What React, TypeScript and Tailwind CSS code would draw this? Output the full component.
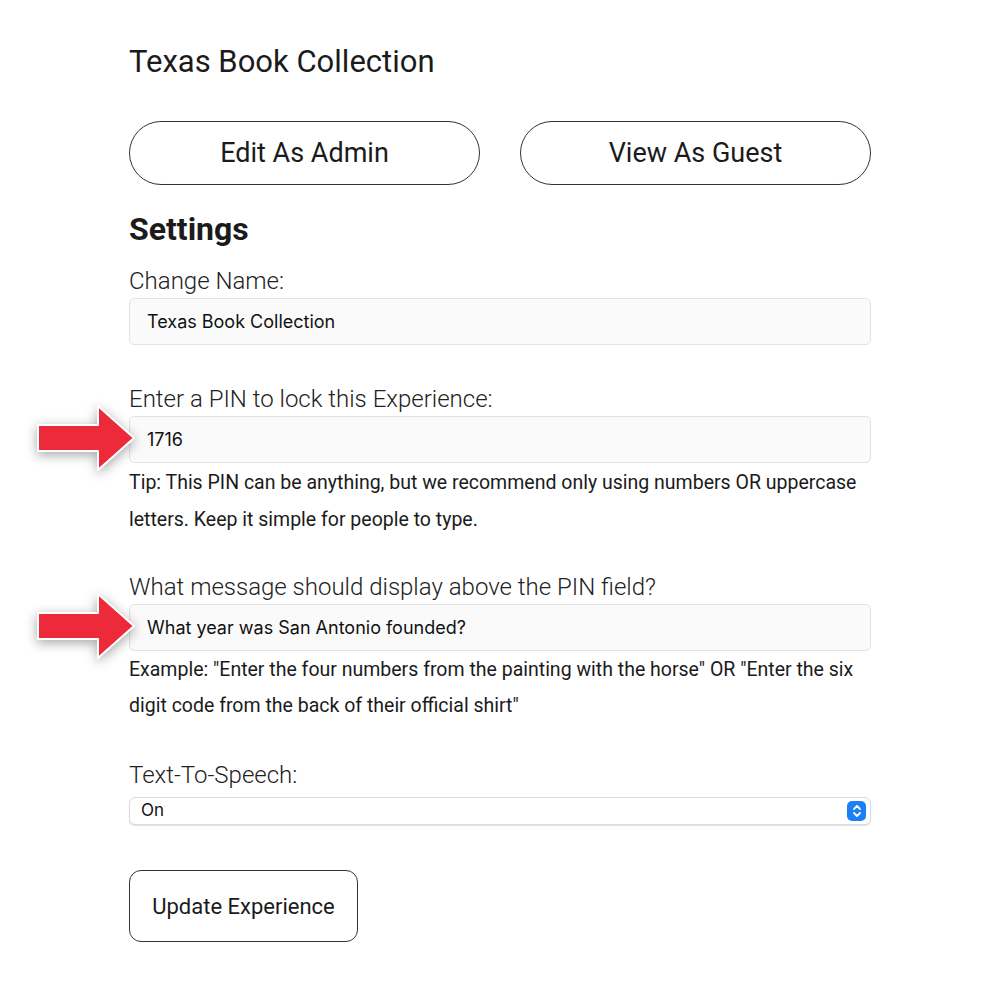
import React from 'react';

const Arrow = () => (
    <svg
        width="100"
        height="68"
        viewBox="0 0 100 68"
        className="absolute left-[-92px] top-[-12px] drop-shadow-[0_3px_6px_rgba(0,0,0,0.35)]"
    >
        <path
            d="M1 21 H61 V2 L97 34 L61 66 V47 H1 Z"
            fill="#ec2a3a"
            stroke="#ffffff"
            strokeWidth="2"
            strokeLinejoin="round"
        />
    </svg>
);

const Label = ({ children, className = '' }: { children: React.ReactNode; className?: string }) => (
    <div className={`text-[24px] leading-[28px] font-light text-[#222] ${className}`}>{children}</div>
);

const TextField = ({ value, arrow = false }: { value: string; arrow?: boolean }) => (
    <div className="relative mt-[3px]">
        {arrow && <Arrow />}
        <input
            readOnly
            value={value}
            className="w-full h-[47px] rounded-[5px] border border-[#e3e3e3] bg-[#fafafa] px-[17px] text-[18px] text-[#111] outline-none font-['Inter',sans-serif]"
        />
    </div>
);

export default function App() {
    return (
        <div className="min-h-screen bg-white font-['Roboto',sans-serif] text-[#1b1b1b]">
            <div className="w-[742px] mx-auto pt-[44px] pb-[46px]">
                <h1 className="text-[31px] leading-[36px] font-normal">Texas Book Collection</h1>

                {/* Mode buttons */}
                <div className="mt-[41px] grid grid-cols-2 gap-[40px]">
                    <button className="h-[64px] rounded-full border-[1.5px] border-[#333] bg-white text-[27px] text-[#1b1b1b]">
                        Edit As Admin
                    </button>
                    <button className="h-[64px] rounded-full border-[1.5px] border-[#333] bg-white text-[27px] text-[#1b1b1b]">
                        View As Guest
                    </button>
                </div>

                <h2 className="mt-[26px] text-[32px] leading-[36px] font-bold">Settings</h2>

                <Label className="mt-[20px]">Change Name:</Label>
                <TextField value="Texas Book Collection" />

                <Label className="mt-[40px]">Enter a PIN to lock this Experience:</Label>
                <TextField value="1716" arrow />
                <p className="mt-[1px] text-[19.5px] leading-[37px] text-[#1b1b1b]">
                    Tip: This PIN can be anything, but we recommend only using numbers OR uppercase letters. Keep it simple for people to type.
                </p>

                <Label className="mt-[35px]">What message should display above the PIN field?</Label>
                <TextField value="What year was San Antonio founded?" arrow />
                <p className="mt-[1px] text-[19.5px] leading-[36px] text-[#1b1b1b]">
                    Example: "Enter the four numbers from the painting with the horse" OR "Enter the six digit code from the back of their official shirt"
                </p>

                <Label className="mt-[37px]">Text-To-Speech:</Label>
                <div className="mt-[8px] h-[28px] flex items-center justify-between rounded-[6px] border border-[#dcdcdc] bg-white shadow-[0_1px_1px_rgba(0,0,0,0.12)] pl-[11px] pr-[4px]">
                    <span className="text-[17px] text-[#111] font-['Inter',sans-serif]">On</span>
                    <span className="w-[19px] h-[20px] rounded-[5px] bg-[#1d7ff5] flex items-center justify-center">
                        <svg width="10" height="14" viewBox="0 0 10 14" fill="none" stroke="white" strokeWidth="1.8" strokeLinecap="round" strokeLinejoin="round">
                            <path d="M2 5 L5 2 L8 5" />
                            <path d="M2 9 L5 12 L8 9" />
                        </svg>
                    </span>
                </div>

                <button className="mt-[45px] w-[229px] h-[72px] rounded-[12px] border-[1.5px] border-[#333] bg-white text-[22px] text-[#1b1b1b]">
                    Update Experience
                </button>
            </div>
        </div>
    );
}
